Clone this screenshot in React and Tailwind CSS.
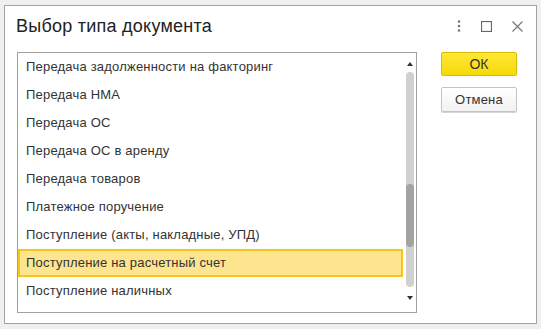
import React from "react";

const items = [
  "Передача задолженности на факторинг",
  "Передача НМА",
  "Передача ОС",
  "Передача ОС в аренду",
  "Передача товаров",
  "Платежное поручение",
  "Поступление (акты, накладные, УПД)",
  "Поступление на расчетный счет",
  "Поступление наличных",
];

const selected = 7;

export default function App() {
  return (
    <div
      className="w-[541px] h-[329px] bg-[#f0f0f0] pt-[5px] pl-[4px]"
      style={{ fontFamily: '"Liberation Sans", Arial, sans-serif' }}
    >
      <div className="w-[533px] h-[319px] bg-white border border-[#a3a3a3] flex flex-col">
        {/* title bar */}
        <div className="h-[45px] flex items-start pt-[8px] pl-[11px] pr-[13px]">
          <div className="flex-1 text-[18px] leading-[24px] tracking-[0.25px] text-[#222]">Выбор типа документа</div>
          <div className="flex items-center gap-[20px] pt-[6px] text-[#777]">
            <svg width="4" height="12" viewBox="0 0 4 12">
              <circle cx="2" cy="1.5" r="1.3" fill="#777" />
              <circle cx="2" cy="6" r="1.3" fill="#777" />
              <circle cx="2" cy="10.5" r="1.3" fill="#777" />
            </svg>
            <svg width="11" height="11" viewBox="0 0 11 11">
              <rect x="0.5" y="0.5" width="10" height="10" fill="none" stroke="#666" strokeWidth="1.2" />
            </svg>
            <svg width="11" height="11" viewBox="0 0 11 11">
              <path d="M0.5 0.5L10.5 10.5M10.5 0.5L0.5 10.5" stroke="#777" strokeWidth="1.2" />
            </svg>
          </div>
        </div>

        {/* body */}
        <div className="flex pl-[12px] pt-[1px]">
          <div className="w-[400px] h-[261px] border border-[#a0a0a0] flex overflow-hidden">
            <div className="w-[385px] flex flex-col">
              {items.map((t, i) => (
                <div
                  key={t}
                  className={`h-[28px] shrink-0 flex items-center text-[13px] tracking-[0.2px] text-[#333] ${
                    i === selected
                      ? "bg-[#fde590] border-2 border-[#f5c518] pl-[6px]"
                      : "pl-[8px]"
                  }`}
                >
                  {t}
                </div>
              ))}
            </div>
            {/* scrollbar */}
            <div className="w-[13px] flex flex-col items-center pt-[9px]">
              <svg width="6" height="4" viewBox="0 0 6 4">
                <path d="M3 0L6 4H0Z" fill="#333" />
              </svg>
              <div className="mt-[6px] w-[8px] h-[215px] rounded-full bg-[#d0d0d0] flex flex-col">
                <div className="mt-[112px] h-[63px] rounded-full bg-[#a3a3a3]" />
              </div>
              <svg className="mt-[9px]" width="6" height="4" viewBox="0 0 6 4">
                <path d="M0 0H6L3 4Z" fill="#333" />
              </svg>
            </div>
          </div>

          {/* buttons */}
          <div className="ml-[24px] flex flex-col gap-[11px]">
            <button className="w-[76px] h-[24px] rounded-[2px] border border-[#d8bd00] bg-gradient-to-b from-[#ffe833] to-[#f7d900] text-[14px] text-[#333] leading-none">
              ОК
            </button>
            <button className="w-[76px] h-[25px] rounded-[2px] border border-[#c4c4c4] bg-gradient-to-b from-white to-[#f2f2f2] shadow-[0_1px_0_#d6d6d6] text-[13px] tracking-[0.2px] text-[#333] leading-none">
              Отмена
            </button>
          </div>
        </div>
      </div>
    </div>
  );
}
